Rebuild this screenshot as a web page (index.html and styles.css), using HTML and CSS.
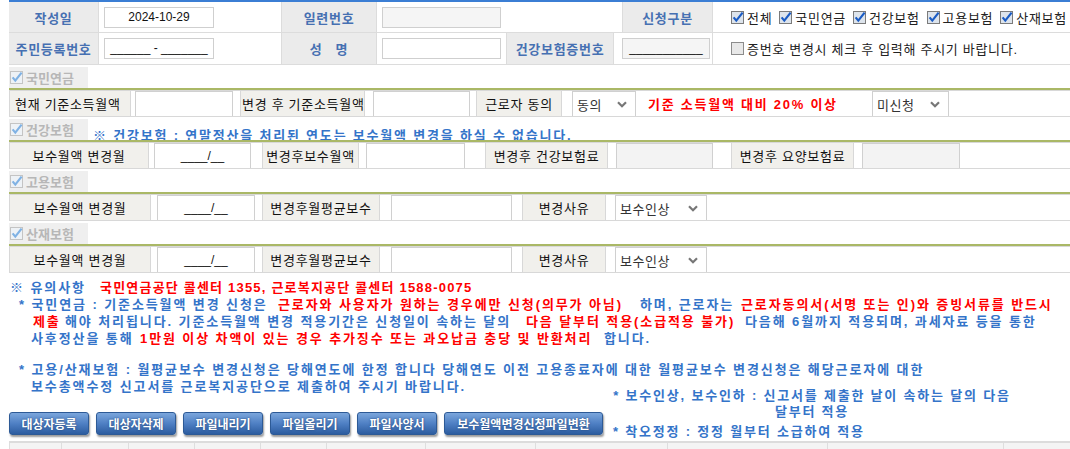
FILE: index.html
```html
<!DOCTYPE html>
<html lang="ko">
<head>
<meta charset="utf-8" />
<title>보수월액 변경신청</title>
<link rel="stylesheet" href="styles.css">
</head>
<body>
<div class="page">

  <!-- 기본 정보 -->
  <div class="info">
    <div class="info-row row1">
      <div class="th">작성일</div>
      <div class="td"><span class="box w110">2024-10-29</span></div>
      <div class="th">일련번호</div>
      <div class="td"><span class="box w119 gray"></span></div>
      <div class="th">신청구분</div>
      <div class="td checks">
        <span class="chk"><svg class="cb" viewBox="0 0 13 13"><rect class="cb-box" x="0.5" y="0.5" width="12" height="12"/><path class="cb-mark" d="M2.6 6.4 5.3 9.6 11.6 1.6"/></svg>전체</span>
        <span class="chk"><svg class="cb" viewBox="0 0 13 13"><rect class="cb-box" x="0.5" y="0.5" width="12" height="12"/><path class="cb-mark" d="M2.6 6.4 5.3 9.6 11.6 1.6"/></svg>국민연금</span>
        <span class="chk"><svg class="cb" viewBox="0 0 13 13"><rect class="cb-box" x="0.5" y="0.5" width="12" height="12"/><path class="cb-mark" d="M2.6 6.4 5.3 9.6 11.6 1.6"/></svg>건강보험</span>
        <span class="chk"><svg class="cb" viewBox="0 0 13 13"><rect class="cb-box" x="0.5" y="0.5" width="12" height="12"/><path class="cb-mark" d="M2.6 6.4 5.3 9.6 11.6 1.6"/></svg>고용보험</span>
        <span class="chk"><svg class="cb" viewBox="0 0 13 13"><rect class="cb-box" x="0.5" y="0.5" width="12" height="12"/><path class="cb-mark" d="M2.6 6.4 5.3 9.6 11.6 1.6"/></svg>산재보험</span>
      </div>
    </div>
    <div class="info-row row2">
      <div class="th">주민등록번호</div>
      <div class="td"><span class="box w110">______ - _______</span></div>
      <div class="th">성 &nbsp; 명</div>
      <div class="td"><span class="box w119"></span></div>
      <div class="th">건강보험증번호</div>
      <div class="td pad8"><span class="box w88 gray">___________</span></div>
      <div class="td checks">
        <span class="chk off"><svg class="cb" viewBox="0 0 13 13"><rect class="cb-box" x="0.5" y="0.5" width="12" height="12"/></svg>증번호 변경시 체크 후 입력해 주시기 바랍니다.</span>
      </div>
    </div>
  </div>

  <!-- 국민연금 -->
  <div class="sec-title">
    <span class="sec-name"><svg class="cb dis" viewBox="0 0 13 13"><rect class="cb-box" x="0.5" y="0.5" width="12" height="12"/><path class="cb-mark" d="M2.6 6.4 5.3 9.6 11.6 1.6"/></svg>국민연금</span>
  </div>
  <div class="frow">
    <span class="lbl left w122">현재 기준소득월액</span>
    <span class="inp ml4 w98"></span>
    <span class="lbl tight ml7 w125">변경 후 기준소득월액</span>
    <span class="inp ml8 w97"></span>
    <span class="lbl ml6 w86">근로자 동의</span>
    <span class="sel ml10 w64">동의<svg class="arr" viewBox="0 0 10 7"><path d="M1 1.2 5 5.2 9 1.2"/></svg></span>
    <span class="warn ml12 w224">기준 소득월액 대비 20% 이상</span>
    <span class="sel w77">미신청<svg class="arr" viewBox="0 0 10 7"><path d="M1 1.2 5 5.2 9 1.2"/></svg></span>
  </div>

  <!-- 건강보험 -->
  <div class="sec-title">
    <span class="sec-name"><svg class="cb dis" viewBox="0 0 13 13"><rect class="cb-box" x="0.5" y="0.5" width="12" height="12"/><path class="cb-mark" d="M2.6 6.4 5.3 9.6 11.6 1.6"/></svg>건강보험</span>
    <span class="sec-note">※ 건강보험 : 연말정산을 처리된 연도는 보수월액 변경을 하실 수 없습니다.</span>
  </div>
  <div class="frow">
    <span class="lbl w140">보수월액 변경월</span>
    <span class="inp ml5 w97">____/__</span>
    <span class="lbl ml11 w97">변경후보수월액</span>
    <span class="inp ml7 w99"></span>
    <span class="lbl ml20 w123">변경후 건강보험료</span>
    <span class="inp gray ml8 w97"></span>
    <span class="lbl ml18 w123">변경후 요양보험료</span>
    <span class="inp gray ml8 w98"></span>
  </div>

  <!-- 고용보험 -->
  <div class="sec-title">
    <span class="sec-name"><svg class="cb dis" viewBox="0 0 13 13"><rect class="cb-box" x="0.5" y="0.5" width="12" height="12"/><path class="cb-mark" d="M2.6 6.4 5.3 9.6 11.6 1.6"/></svg>고용보험</span>
  </div>
  <div class="frow">
    <span class="lbl w142">보수월액 변경월</span>
    <span class="inp ml6 w98">____/__</span>
    <span class="lbl ml7 w118">변경후월평균보수</span>
    <span class="inp ml11 w121"></span>
    <span class="lbl ml10 w84">변경사유</span>
    <span class="sel ml9 w92">보수인상<svg class="arr" viewBox="0 0 10 7"><path d="M1 1.2 5 5.2 9 1.2"/></svg></span>
  </div>

  <!-- 산재보험 -->
  <div class="sec-title">
    <span class="sec-name"><svg class="cb dis" viewBox="0 0 13 13"><rect class="cb-box" x="0.5" y="0.5" width="12" height="12"/><path class="cb-mark" d="M2.6 6.4 5.3 9.6 11.6 1.6"/></svg>산재보험</span>
  </div>
  <div class="frow">
    <span class="lbl w142">보수월액 변경월</span>
    <span class="inp ml6 w98">____/__</span>
    <span class="lbl ml7 w118">변경후월평균보수</span>
    <span class="inp ml11 w121"></span>
    <span class="lbl ml10 w84">변경사유</span>
    <span class="sel ml9 w92">보수인상<svg class="arr" viewBox="0 0 10 7"><path d="M1 1.2 5 5.2 9 1.2"/></svg></span>
  </div>

  <!-- 유의사항 -->
  <div class="notes">
    <p class="in1"><span class="seg s90">※ 유의사항</span><span class="red call">국민연금공단 콜센터 1355, 근로복지공단 콜센터 1588-0075</span></p>
    <p class="in10"><span class="seg s259">* 국민연금 : 기준소득월액 변경 신청은</span><span class="red seg s362">근로자와 사용자가 원하는 경우에만 신청(의무가 아님)</span><span class="seg s101">하며, 근로자는</span><span class="red">근로자동의서(서명 또는 인)와 증빙서류를 반드시</span></p>
    <p class="in24"><span class="red seg s32">제출</span><span class="seg s461">해야 처리됩니다. 기준소득월액 변경 적용기간은 신청일이 속하는 달의</span><span class="red seg s219">다음 달부터 적용(소급적용 불가)</span><span>다음해 6월까지 적용되며, 과세자료 등을 통한</span></p>
    <p class="in22"><span class="seg s109">사후정산을 통해</span><span class="red seg s464">1만원 이상 차액이 있는 경우 추가징수 또는 과오납금 충당 및 반환처리</span><span>합니다.</span></p>
    <p class="in10 gap">* 고용/산재보험 : 월평균보수 변경신청은 당해연도에 한정 합니다 당해연도 이전 고용종료자에 대한 월평균보수 변경신청은 해당근로자에 대한</p>
    <p class="in22">보수총액수정 신고서를 근로복지공단으로 제출하여 주시기 바랍니다.</p>
  </div>

  <!-- 버튼 -->
  <div class="bottom">
    <div class="btns">
      <span class="btn">대상자등록</span>
      <span class="btn">대상자삭제</span>
      <span class="btn">파일내리기</span>
      <span class="btn">파일올리기</span>
      <span class="btn">파일사양서</span>
      <span class="btn wide">보수월액변경신청파일변환</span>
    </div>
    <div class="rnotes">
      <p class="center">* 보수인상, 보수인하 : 신고서를 제출한 날이 속하는 달의 다음<br>달부터 적용</p>
      <p class="second">* 착오정정 : 정정 월부터 소급하여 적용</p>
    </div>
  </div>

  <div class="grid-head">
    <span></span><span></span><span></span><span></span><span></span><span></span><span></span><span></span><span></span><span></span><span></span>
  </div>

</div>
</body>
</html>
```

FILE: styles.css
```css
* {
  box-sizing: border-box;
}

body {
  margin: 0;
  overflow: hidden;
  background: #fff;
  color: #222;
  font-family: "Liberation Sans", "Noto Sans CJK KR", sans-serif;
  font-size: 13px;
}

p {
  margin: 0;
}

.page {
  margin-left: 9px;
}

/* 기본 정보 */
.info {
  border-top: 2px solid #3b7ed4;
}

.info-row {
  display: grid;
  border-bottom: 1px solid #dcdcdc;
}

.row1 {
  grid-template-columns: 90px 183px 95px 246px 90px 1fr;
  height: 31px;
}

.row2 {
  grid-template-columns: 90px 183px 95px 130px 107px 99px 1fr;
  height: 32px;
}

.th {
  display: flex;
  align-items: center;
  justify-content: center;
  background: #ebebeb;
  border-right: 1px solid #dcdcdc;
  color: #4670b2;
  font-weight: bold;
  letter-spacing: 0.7px;
  white-space: nowrap;
}

.td {
  padding: 5px 0 0 5px;
  border-right: 1px solid #dcdcdc;
}

.td.pad8 {
  padding-left: 8px;
}

.box {
  display: block;
  height: 21px;
  border: 1px solid #cfcfcf;
  background: #fff;
  color: #111;
  font-size: 12px;
  line-height: 19px;
  text-align: center;
  white-space: nowrap;
}

.box.gray {
  background: #f5f5f5;
}

.w110 { width: 110px; }
.w119 { width: 119px; }
.w88 { width: 88px; }

.checks {
  display: flex;
  align-items: center;
  padding: 0 0 0 18px;
  border-right: none;
  letter-spacing: 0.7px;
  white-space: nowrap;
}

.chk {
  display: inline-flex;
  align-items: center;
  margin-right: 7px;
}

/* 체크박스 */
.cb {
  width: 13px;
  height: 13px;
  flex: none;
  margin-right: 3px;
  overflow: visible;
}

.cb-box {
  fill: #dde4ec;
  stroke: #7b7b7b;
}

.cb-mark {
  fill: none;
  stroke: #1b5cc4;
  stroke-width: 2.2;
}

.off .cb-box {
  fill: #e8e8e8;
  stroke: #8c8c8c;
}

.cb.dis .cb-box {
  fill: #eef2f6;
  stroke: #c4c4c4;
}

.cb.dis .cb-mark {
  stroke: #80b2e4;
}

/* 보험별 영역 */
.sec-title {
  display: flex;
  height: 21px;
  margin-top: 2px;
  overflow: hidden;
}

.sec-name {
  display: flex;
  align-items: center;
  width: 79px;
  padding-left: 1px;
  background: #efefef;
  color: #b7b7b7;
  font-weight: bold;
  white-space: nowrap;
}

.sec-note {
  margin: 8px 0 0 5px;
  color: #3474c9;
  font-weight: bold;
  letter-spacing: 1.8px;
  line-height: 17px;
  white-space: nowrap;
}

.frow {
  display: flex;
  height: 29px;
  padding-top: 1px;
  border-top: 2px solid #aab866;
  border-bottom: 1px solid #d8d8d8;
  box-shadow: inset 0 1px 0 #d8d8d8;
}

.lbl {
  display: flex;
  align-items: center;
  justify-content: center;
  flex: none;
  background: #f1f0ec;
  border-left: 1px solid #d8d8d8;
  border-right: 1px solid #d8d8d8;
  color: #111;
  letter-spacing: 0.7px;
  white-space: nowrap;
  overflow: hidden;
}

.lbl.left {
  justify-content: flex-start;
  padding-left: 5px;
}

.lbl.tight {
  justify-content: flex-start;
  padding-left: 1px;
}

.inp {
  display: flex;
  align-items: center;
  justify-content: center;
  flex: none;
  background: #fff;
  border: 1px solid #d0d0d0;
  border-bottom: none;
  color: #111;
  font-size: 12px;
}

.inp.gray {
  background: #f3f3f3;
}

.sel {
  display: flex;
  align-items: center;
  justify-content: space-between;
  flex: none;
  padding: 0 8px 0 4px;
  background: #fff;
  border: 1px solid #d0d0d0;
  border-bottom: none;
  color: #333;
  letter-spacing: 0.5px;
}

.arr {
  width: 10px;
  height: 7px;
}

.arr path {
  fill: none;
  stroke: #777;
  stroke-width: 2.2;
}

.warn {
  display: flex;
  align-items: center;
  flex: none;
  color: #f00;
  font-weight: bold;
  letter-spacing: 1.75px;
  white-space: nowrap;
}

.ml4 { margin-left: 4px; }
.ml5 { margin-left: 5px; }
.ml6 { margin-left: 6px; }
.ml7 { margin-left: 7px; }
.ml8 { margin-left: 8px; }
.ml9 { margin-left: 9px; }
.ml10 { margin-left: 10px; }
.ml11 { margin-left: 11px; }
.ml12 { margin-left: 12px; }
.ml18 { margin-left: 18px; }
.ml20 { margin-left: 20px; }

.w64 { width: 64px; }
.w77 { width: 77px; }
.w84 { width: 84px; }
.w86 { width: 86px; }
.w92 { width: 92px; }
.w97 { width: 97px; }
.w98 { width: 98px; }
.w99 { width: 99px; }
.w118 { width: 118px; }
.w121 { width: 121px; }
.w122 { width: 122px; }
.w123 { width: 123px; }
.w125 { width: 125px; }
.w140 { width: 140px; }
.w142 { width: 142px; }
.w224 { width: 224px; }

/* 유의사항 */
.notes {
  margin-top: 6px;
  color: #3474c9;
  font-weight: bold;
  letter-spacing: 1.9px;
  line-height: 17px;
  white-space: nowrap;
}

.notes .red {
  color: #f00;
}

.notes .call {
  letter-spacing: 1.2px;
}

.seg {
  display: inline-block;
}

.s32 { width: 32px; }
.s90 { width: 90px; }
.s101 { width: 101px; }
.s109 { width: 109px; }
.s219 { width: 219px; }
.s259 { width: 259px; }
.s362 { width: 362px; }
.s461 { width: 461px; }
.s464 { width: 464px; }

.in1 { padding-left: 1px; }
.in10 { padding-left: 10px; }
.in22 { padding-left: 22px; }
.in24 { padding-left: 24px; }

.notes .gap {
  margin-top: 14px;
}

/* 버튼 */
.bottom {
  display: flex;
  height: 52px;
  margin-top: -7px;
}

.btns {
  display: flex;
  gap: 7px;
  margin-top: 24px;
}

.btn {
  display: flex;
  align-items: center;
  justify-content: center;
  width: 80px;
  height: 23px;
  background: linear-gradient(#7ba6dc, #4f80c4 50%, #2c5c9f);
  border: 1px solid #2d5a96;
  border-radius: 3px;
  box-shadow: 1px 2px 2px rgba(0, 0, 0, 0.4);
  color: #fff;
  font-size: 12px;
  font-weight: bold;
  text-shadow: 0 0 2px #1d3f70;
  white-space: nowrap;
}

.btn.wide {
  width: 159px;
}

.rnotes {
  width: 398px;
  margin-left: 10px;
  color: #3474c9;
  font-weight: bold;
  letter-spacing: 1.8px;
  line-height: 16px;
  white-space: nowrap;
}

.rnotes .center {
  text-align: center;
}

.rnotes .second {
  margin-top: 4px;
}

/* 목록 머리 */
.grid-head {
  display: grid;
  grid-template-columns: 52px 67px 66px 66px 66px 99px 110px 132px 160px 176px 1fr;
  height: 12px;
  margin-top: 1px;
  border-top: 2px solid #dcdcdc;
  background: #f4f4f4;
}

.grid-head span {
  border-left: 1px solid #dedede;
}
```
